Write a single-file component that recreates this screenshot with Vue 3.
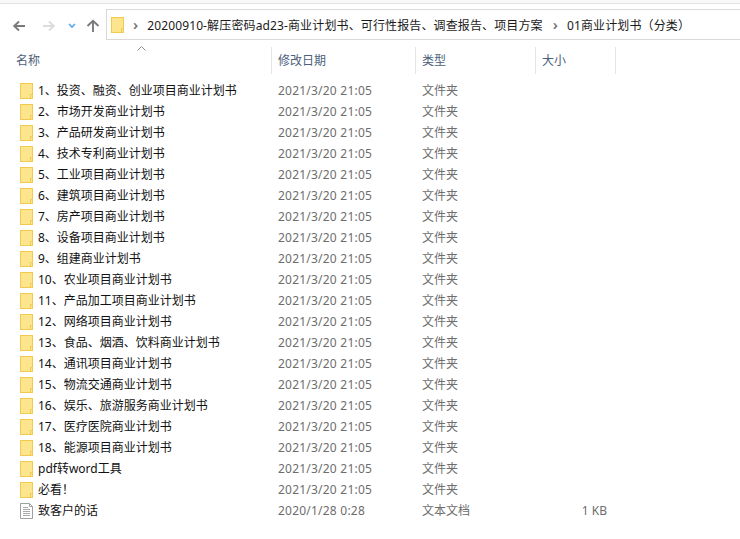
<script setup>
const names = [
  "1、投资、融资、创业项目商业计划书",
  "2、市场开发商业计划书",
  "3、产品研发商业计划书",
  "4、技术专利商业计划书",
  "5、工业项目商业计划书",
  "6、建筑项目商业计划书",
  "7、房产项目商业计划书",
  "8、设备项目商业计划书",
  "9、组建商业计划书",
  "10、农业项目商业计划书",
  "11、产品加工项目商业计划书",
  "12、网络项目商业计划书",
  "13、食品、烟酒、饮料商业计划书",
  "14、通讯项目商业计划书",
  "15、物流交通商业计划书",
  "16、娱乐、旅游服务商业计划书",
  "17、医疗医院商业计划书",
  "18、能源项目商业计划书",
  "pdf转word工具",
  "必看！",
];
const rows = names.map((name) => ({ name, date: "2021/3/20 21:05", type: "文件夹", size: "", file: false }));
rows.push({ name: "致客户的话", date: "2020/1/28 0:28", type: "文本文档", size: "1 KB", file: true });
</script>

<template>
  <div class="window">
    <div class="top-line"></div>
    <div class="nav">
      <div class="nav-buttons">
        <svg width="14" height="14" viewBox="0 0 14 14" class="back"><path d="M13 7H2M7 2.5L2.2 7 7 11.5" fill="none" stroke="#7a7a7a" stroke-width="1.9" /></svg>
        <svg width="14" height="14" viewBox="0 0 14 14" class="forward"><path d="M1 7h11M7 2.5L11.8 7 7 11.5" fill="none" stroke="#dcdcdc" stroke-width="1.9" /></svg>
        <svg width="8" height="6" viewBox="0 0 8 6" class="recent"><path d="M1 1l3 3 3-3" fill="none" stroke="#5aa9f0" stroke-width="1.7" /></svg>
        <svg width="14" height="14" viewBox="0 0 14 14" class="up"><path d="M7 13V1.5M1.5 7L7 1.8 12.5 7" fill="none" stroke="#7a7a7a" stroke-width="1.9" /></svg>
      </div>
      <div class="address">
        <svg width="13" height="16" viewBox="0 0 13 16" class="folder"><rect x="0.5" y="0.5" width="12" height="15" fill="#fde58e" stroke="#f2ca50" /><path d="M10.5 15.5v-4h2" fill="none" stroke="#f2ca50" /></svg>
        <span class="chev">›</span>
        <span class="crumb">20200910-解压密码ad23-商业计划书、可行性报告、调查报告、项目方案</span>
        <span class="chev">›</span>
        <span class="crumb">01商业计划书（分类）</span>
      </div>
    </div>
    <div class="sort-arrow">
      <svg width="9" height="5" viewBox="0 0 9 5"><path d="M0.5 4.5l4-4 4 4" fill="none" stroke="#8a8a8a" /></svg>
    </div>
    <div class="head">
      <div class="col-name">名称</div>
      <div class="col-date">修改日期</div>
      <div class="col-type">类型</div>
      <div class="col-size">大小</div>
    </div>
    <div class="list">
      <div v-for="row in rows" :key="row.name" class="row">
        <div class="cell-name">
          <svg v-if="!row.file" width="13" height="16" viewBox="0 0 13 16" class="icon"><rect x="0.5" y="0.5" width="12" height="15" fill="#fde58e" stroke="#f2ca50" /><path d="M10.5 15.5v-4h2" fill="none" stroke="#f2ca50" /></svg>
          <svg v-else width="13" height="16" viewBox="0 0 13 16" class="icon"><path d="M0.5 0.5h9l3 3v12H0.5z" fill="#fff" stroke="#a0a0a0" /><path d="M9.5 0.5v3h3" fill="none" stroke="#a0a0a0" /><path d="M3 4.5h5M3 6.5h7M3 8.5h7M3 10.5h7M3 12.5h7" stroke="#a8a8a8" /></svg>
          <span class="cjk-text">{{ row.name }}</span>
        </div>
        <div class="cell-date">{{ row.date }}</div>
        <div class="cell-type"><span class="cjk-text">{{ row.type }}</span></div>
        <div class="cell-size">{{ row.size }}</div>
      </div>
    </div>
  </div>
</template>

<style scoped>
.window {
  width: 740px;
  height: 539px;
  overflow: hidden;
  position: relative;
  background: #fff;
  font-family: "Noto Sans", "Noto Sans CJK SC", sans-serif;
  font-size: 12px;
}

.top-line {
  height: 3px;
  border-bottom: 1px solid #e3e3e3;
  background: #f8f8f8;
}

.nav {
  display: flex;
  margin-top: 5px;
  height: 31px;
}

.nav-buttons {
  width: 106px;
  display: flex;
  align-items: center;
  padding: 2px 0 0 12px;
  box-sizing: border-box;
}

.forward {
  margin-left: 16px;
}

.recent {
  margin-left: 12px;
}

.up {
  margin-left: 10px;
}

.address {
  flex: 1;
  display: flex;
  align-items: center;
  border: 1px solid #d9d9d9;
  border-right: none;
  padding-left: 4px;
  color: #1a1a1a;
  font-size: 12px;
}

.folder {
  margin-right: 9px;
}

.chev {
  color: #777;
  font-size: 15px;
  font-weight: 600;
  margin-right: 9px;
  line-height: 1;
}

.crumb {
  margin-right: 10px;
  white-space: nowrap;
  letter-spacing: 0.13px;
}

.sort-arrow {
  position: absolute;
  left: 137px;
  top: 46px;
  line-height: 0;
}

.head {
  display: flex;
  margin-top: 7px;
  height: 27px;
  color: #4c607a;
  line-height: 27px;
}

.head > div {
  box-sizing: border-box;
  padding-left: 6px;
  border-right: 1px solid #e5e5e5;
}

.head .col-name {
  width: 272px;
  padding-left: 16px;
}

.col-date {
  width: 144px;
}

.col-type {
  width: 120px;
}

.col-size {
  width: 80px;
}

.list {
  margin-top: 6px;
}

.row {
  display: flex;
  height: 21px;
  align-items: center;
  color: #6d6d6d;
  white-space: nowrap;
}

.cell-name {
  width: 272px;
  display: flex;
  align-items: center;
  padding-left: 20px;
  box-sizing: border-box;
  color: #111;
}

.cjk-text {
  display: block;
  padding-bottom: 2px;
}

.icon {
  margin-right: 5px;
  flex: none;
}

.cell-date {
  width: 144px;
  padding-left: 6px;
  box-sizing: border-box;
  letter-spacing: 0.22px;
}

.cell-type {
  width: 120px;
  padding-left: 6px;
  box-sizing: border-box;
}

.cell-size {
  width: 71px;
  text-align: right;
}
</style>
